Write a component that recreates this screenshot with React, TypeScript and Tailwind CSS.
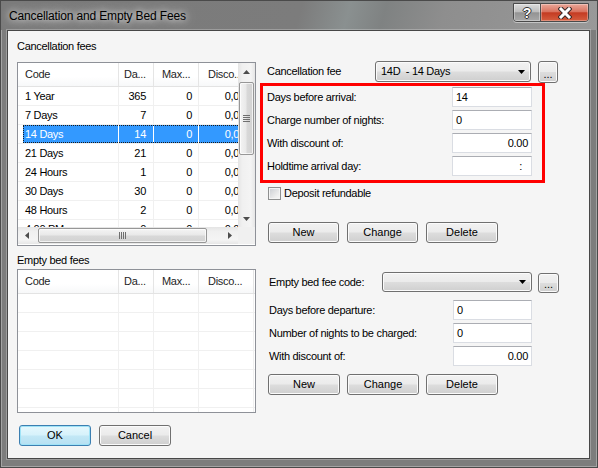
import React from "react";

type FeeRow = { code: string; days: string; max: string; disc: string };

const cancelRows: FeeRow[] = [
  { code: "1 Year", days: "365", max: "0", disc: "0,00" },
  { code: "7 Days", days: "7", max: "0", disc: "0,00" },
  { code: "14 Days", days: "14", max: "0", disc: "0,00" },
  { code: "21 Days", days: "21", max: "0", disc: "0,00" },
  { code: "24 Hours", days: "1", max: "0", disc: "0,00" },
  { code: "30 Days", days: "30", max: "0", disc: "0,00" },
  { code: "48 Hours", days: "2", max: "0", disc: "0,00" },
  { code: "4:00 PM", days: "0", max: "0", disc: "0,00" },
];

// Win7 style push button face
const face =
  "rounded-[3px] border border-[#707070] bg-[linear-gradient(#f2f2f2,#ebebeb_48%,#dddddd_52%,#cfcfcf)] shadow-[inset_0_0_0_1px_#fbfbfb] flex shrink-0";

function WinButton({ label, className }: { label: string; className: string }) {
  return <div className={`${face} h-[21px] items-center justify-center tracking-normal ${className}`}>{label}</div>;
}

function Combo({ text, className }: { text: string; className: string }) {
  return (
    <div className={`${face} items-center justify-between pl-[5px] pr-[5px] ${className}`}>
      <span className="whitespace-pre tracking-[-0.3px]">{text}</span>
      <svg width="7" height="4" viewBox="0 0 7 4">
        <polygon points="0,0 7,0 3.5,4" fill="#000" />
      </svg>
    </div>
  );
}

function Dots({ className }: { className: string }) {
  return (
    <div className={`${face} items-end justify-center pb-[4px] leading-[8px] tracking-normal ${className}`}>...</div>
  );
}

function TextBox({ value, right, pr }: { value: string; right?: boolean; pr?: string }) {
  return (
    <div
      className={`h-[20px] bg-white border border-[#dadde3] border-t-[#abadb3] flex items-center ${
        right ? `justify-end ${pr ?? "pr-[3px]"}` : "pl-[3px]"
      }`}
    >
      {value}
    </div>
  );
}

function Arrow({ dir }: { dir: "up" | "down" | "left" | "right" }) {
  const pts = {
    up: "0,4 7,4 3.5,0",
    down: "0,0 7,0 3.5,4",
    left: "4,0 4,7 0,3.5",
    right: "0,0 0,7 4,3.5",
  }[dir];
  const vertical = dir === "up" || dir === "down";
  return (
    <svg width={vertical ? 7 : 4} height={vertical ? 4 : 7} viewBox={vertical ? "0 0 7 4" : "0 0 4 7"}>
      <polygon points={pts} fill="#4d4d4d" />
    </svg>
  );
}

function VScroll() {
  return (
    <div className="w-[17px] h-full flex flex-col bg-[linear-gradient(90deg,#e4e4e4,#f0f0f0_25%,#f4f4f4_75%,#e6e6e6)]">
      <div className="h-[17px] flex items-center justify-center">
        <Arrow dir="up" />
      </div>
      <div className="mt-[2px] mx-[1px] h-[73px] rounded-[2px] border border-[#979797] bg-[linear-gradient(90deg,#f4f4f4,#e9e9e9_45%,#d8d8d8_55%,#d2d2d2)] shadow-[inset_0_0_0_1px_rgba(255,255,255,0.7)] flex items-center justify-center">
        <svg width="7" height="7" viewBox="0 0 7 7">
          <g fill="#6f6f6f">
            <rect x="0" y="0" width="7" height="1" />
            <rect x="0" y="2" width="7" height="1" />
            <rect x="0" y="4" width="7" height="1" />
            <rect x="0" y="6" width="7" height="1" />
          </g>
        </svg>
      </div>
      <div className="flex-1" />
      <div className="h-[17px] flex items-center justify-center">
        <Arrow dir="down" />
      </div>
    </div>
  );
}

function HScroll() {
  return (
    <div className="h-[17px] w-[220px] flex bg-[linear-gradient(#e4e4e4,#f0f0f0_25%,#f4f4f4_75%,#e6e6e6)]">
      <div className="w-[17px] flex items-center justify-center">
        <Arrow dir="left" />
      </div>
      <div className="ml-[3px] my-[1px] w-[169px] rounded-[2px] border border-[#979797] bg-[linear-gradient(#f4f4f4,#e9e9e9_45%,#d8d8d8_55%,#d2d2d2)] shadow-[inset_0_0_0_1px_rgba(255,255,255,0.7)] flex items-center justify-center">
        <svg width="7" height="7" viewBox="0 0 7 7">
          <g fill="#6f6f6f">
            <rect x="0" y="0" width="1" height="7" />
            <rect x="2" y="0" width="1" height="7" />
            <rect x="4" y="0" width="1" height="7" />
            <rect x="6" y="0" width="1" height="7" />
          </g>
        </svg>
      </div>
      <div className="flex-1" />
      <div className="w-[17px] flex items-center justify-center">
        <Arrow dir="right" />
      </div>
    </div>
  );
}

function Header() {
  const cell = "h-full flex items-center border-r border-[#e5e5e5] whitespace-nowrap overflow-hidden shrink-0";
  return (
    <div className="flex h-[24px] shrink-0 border-b border-[#e3e3e3] bg-[linear-gradient(#ffffff,#ffffff_60%,#f7f8f9)] text-[#1e1e1e]">
      <div className={`${cell} w-[101px] pl-[7px]`}>Code</div>
      <div className={`${cell} w-[35px] pl-[5px]`}>Da...</div>
      <div className={`${cell} w-[45px] pl-[8px]`}>Max...</div>
      <div className={`${cell} w-[55px] pl-[9px]`}>Disco...</div>
    </div>
  );
}

function Row({ row, selected }: { row?: FeeRow; selected?: boolean }) {
  const line = selected ? "border-white" : "border-[#f0f0f0]";
  const cell = `h-full flex items-center border-r ${line} whitespace-nowrap shrink-0`;
  return (
    <div
      className={`relative flex h-[19px] shrink-0 border-b border-[#f0f0f0] ${
        selected ? "bg-[linear-gradient(90deg,#ffffff_5px,#3399ff_5px)] text-white" : ""
      }`}
    >
      {selected && (
        <div className="absolute left-[5px] right-0 top-0 bottom-0 border border-dotted border-[#1a1a1a] pointer-events-none" />
      )}
      <div className={`${cell} w-[101px] pl-[7px]`}>{row?.code}</div>
      <div className={`${cell} w-[35px] justify-end pr-[7px]`}>{row?.days}</div>
      <div className={`${cell} w-[45px] justify-end pr-[6px]`}>{row?.max}</div>
      <div className={`${cell} w-[55px] justify-end pr-[8px]`}>{row?.disc}</div>
    </div>
  );
}

function CancelList() {
  return (
    <div className="w-[239px] h-[184px] border border-[#8e9198] bg-white flex flex-col overflow-hidden">
      <div className="flex h-[164px] shrink-0">
        <div className="w-[220px] overflow-hidden flex flex-col">
          <div className="w-[236px] flex flex-col">
            <Header />
            {cancelRows.map((r, i) => (
              <Row key={r.code} row={r} selected={i === 2} />
            ))}
          </div>
        </div>
        <VScroll />
      </div>
      <div className="flex shrink-0">
        <HScroll />
        <div className="w-[17px] h-[17px] bg-[#f0f0f0]" />
      </div>
    </div>
  );
}

function EmptyBedList() {
  return (
    <div className="w-[239px] h-[144px] border border-[#8e9198] bg-white flex flex-col overflow-hidden">
      <Header />
      {[0, 1, 2, 3, 4, 5, 6].map((i) => (
        <Row key={i} />
      ))}
    </div>
  );
}

function Check() {
  return (
    <div className="w-[13px] h-[13px] border border-[#8e8f8f] bg-[linear-gradient(135deg,#c9ccd1,#eeeeee_70%,#f7f7f7)] shadow-[inset_0_0_0_1px_#f4f4f4]" />
  );
}

function TitleBar() {
  return (
    <div className="h-[29px] shrink-0 flex items-start bg-[linear-gradient(105deg,#7a7a7a_0%,#7c7c7c_50%,#8a9090_58%,#7f8282_64%,#8e8e8e_74%,#999999_100%)]">
      <div className="pl-[8px] pt-[7px] leading-[16px] text-[12px] tracking-[-0.15px] text-black font-['Liberation_Sans',Arial,sans-serif] [text-shadow:0_0_6px_rgba(255,255,255,0.95),0_0_12px_rgba(255,255,255,0.7)]">
        Cancellation and Empty Bed Fees
      </div>
      <div className="ml-auto mr-[8px] mt-[2px] flex h-[19px] rounded-b-[4px] border border-[#4a4a4a] overflow-hidden shadow-[0_1px_0_rgba(255,255,255,0.45)]">
        <div className="w-[27px] border-r border-[#505050] bg-[linear-gradient(#dcdcdc,#bdbdbd_45%,#939393_52%,#a8a8a8)] shadow-[inset_0_0_0_1px_rgba(255,255,255,0.35)] flex items-center justify-center">
          <span className="text-white font-bold text-[14px] leading-[14px] font-['Liberation_Sans',Arial,sans-serif] [text-shadow:1px_0_0_#333,-1px_0_0_#333,0_1px_0_#333,0_-1px_0_#333]">
            ?
          </span>
        </div>
        <div className="w-[47px] bg-[linear-gradient(#eaa89a,#d9735f_45%,#c43b22_52%,#d55e3f)] shadow-[inset_0_0_0_1px_rgba(255,255,255,0.3)] flex items-center justify-center">
          <svg width="14" height="12" viewBox="0 0 14 12">
            <path d="M3 2 L11 10 M11 2 L3 10" stroke="#3a2a28" strokeWidth="5" strokeLinecap="square" />
            <path d="M3 2 L11 10 M11 2 L3 10" stroke="#ffffff" strokeWidth="3" strokeLinecap="square" />
          </svg>
        </div>
      </div>
    </div>
  );
}

function Field({ label, value, right, pr, labelW, boxW }: {
  label: string; value: string; right?: boolean; pr?: string; labelW: string; boxW: string;
}) {
  return (
    <div className="flex items-center h-[20px] shrink-0">
      <div className={`${labelW} whitespace-nowrap`}>{label}</div>
      <div className={boxW}>
        <TextBox value={value} right={right} pr={pr} />
      </div>
    </div>
  );
}

export default function App() {
  return (
    <div className="w-[598px] h-[468px] flex flex-col overflow-hidden border border-[#4a4a4a] bg-[#7d7d7d] shadow-[inset_0_0_0_1px_rgba(255,255,255,0.3)] font-['Liberation_Sans',Arial,sans-serif] text-[11px] tracking-[-0.3px] text-black">
      <TitleBar />
      <div className="ml-[6px] mr-[7px] h-[429px] shrink-0 border border-[#474747] bg-[#f5f5f5] shadow-[0_0_0_1px_rgba(255,255,255,0.25)] flex flex-col pl-[9px]">
        {/* Cancellation fees */}
        <div className="flex h-[215px] shrink-0">
          <div className="w-[239px] flex flex-col shrink-0">
            <div className="h-[31px] pt-[8px] leading-[14px] shrink-0">Cancellation fees</div>
            <CancelList />
          </div>
          <div className="ml-[4px] pt-[30px] flex flex-col">
            <div className="flex h-[22px] shrink-0 items-start">
              <div className="w-[115px] pl-[7px] leading-[21px] whitespace-nowrap">Cancellation fee</div>
              <Combo text="14D  - 14 Days" className="w-[156px] h-[21px]" />
              <Dots className="ml-[7px] w-[20px] h-[22px]" />
            </div>
            <div className="w-[285px] h-[100px] shrink-0 border-[3px] border-[#ff0000] pl-[4px] pt-[1px] flex flex-col gap-[3px]">
              <Field label="Days before arrival:" value="14" labelW="w-[185px]" boxW="w-[80px]" />
              <Field label="Charge number of nights:" value="0" labelW="w-[185px]" boxW="w-[80px]" />
              <Field label="With discount of:" value="0.00" right labelW="w-[185px]" boxW="w-[80px]" />
              <Field label="Holdtime arrival day:" value=":" right pr="pr-[9px]" labelW="w-[185px]" boxW="w-[80px]" />
            </div>
            <div className="flex items-center mt-[4px] ml-[8px] h-[13px] shrink-0">
              <Check />
              <span className="ml-[3px] leading-[13px]">Deposit refundable</span>
            </div>
            <div className="flex gap-[8px] mt-[22px] ml-[8px] shrink-0">
              <WinButton label="New" className="w-[71px]" />
              <WinButton label="Change" className="w-[71px]" />
              <WinButton label="Delete" className="w-[72px]" />
            </div>
          </div>
        </div>

        {/* Empty bed fees */}
        <div className="flex h-[167px] shrink-0">
          <div className="w-[239px] flex flex-col shrink-0">
            <div className="h-[23px] pt-[7px] leading-[14px] shrink-0">Empty bed fees</div>
            <EmptyBedList />
          </div>
          <div className="ml-[4px] pt-[26px] pl-[8px] flex flex-col">
            <div className="flex h-[21px] shrink-0 items-start">
              <div className="w-[114px] pl-[1px] leading-[20px] whitespace-nowrap">Empty bed fee code:</div>
              <Combo text="" className="w-[150px] h-[20px]" />
              <Dots className="ml-[6px] mt-[1px] w-[21px] h-[20px]" />
            </div>
            <div className="mt-[7px] flex flex-col gap-[3px] shrink-0">
              <Field label="Days before departure:" value="0" labelW="w-[185px] pl-[1px]" boxW="w-[79px]" />
              <Field label="Number of nights to be charged:" value="0" labelW="w-[185px] pl-[1px]" boxW="w-[79px]" />
              <Field label="With discount of:" value="0.00" right labelW="w-[185px] pl-[1px]" boxW="w-[79px]" />
            </div>
            <div className="flex gap-[7px] mt-[8px] shrink-0">
              <WinButton label="New" className="w-[72px]" />
              <WinButton label="Change" className="w-[72px]" />
              <WinButton label="Delete" className="w-[72px]" />
            </div>
          </div>
        </div>

        {/* Dialog buttons */}
        <div className="flex gap-[8px] mt-[12px] ml-[2px] shrink-0">
          <div className="h-[21px] w-[72px] rounded-[3px] border border-[#3c7fb1] bg-[linear-gradient(#e6f8fd,#d6f2fb_48%,#c2e8f6_52%,#b6e0f2)] shadow-[inset_0_0_0_1px_#9fe3f7] flex items-center justify-center tracking-normal">
            OK
          </div>
          <WinButton label="Cancel" className="w-[72px]" />
        </div>
      </div>
    </div>
  );
}
